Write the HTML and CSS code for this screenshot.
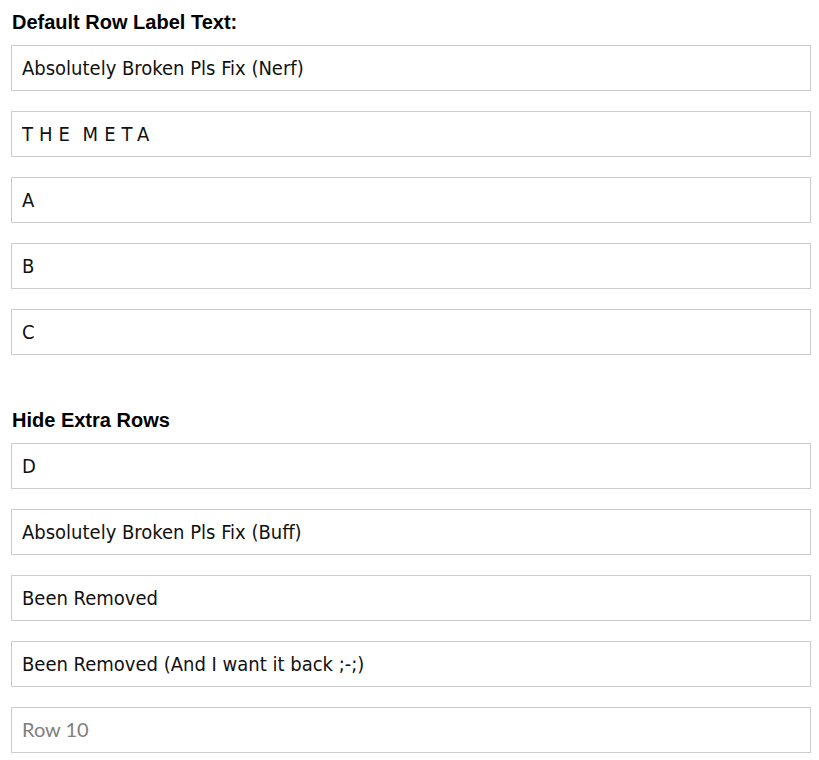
FILE: index.html
```html
<!DOCTYPE html>
<html>
<head>
<meta charset="utf-8">
<link rel="stylesheet" href="styles.css">
</head>
<body>
<div class="page">
  <section class="group">
    <h2 class="group-title">Default Row Label Text:</h2>
    <div class="fields">
      <input class="field" type="text" value="Absolutely Broken Pls Fix (Nerf)">
      <input class="field spaced" type="text" value="THE META">
      <input class="field" type="text" value="A">
      <input class="field" type="text" value="B">
      <input class="field" type="text" value="C">
    </div>
  </section>
  <section class="group">
    <h2 class="group-title">Hide Extra Rows</h2>
    <div class="fields">
      <input class="field" type="text" value="D">
      <input class="field" type="text" value="Absolutely Broken Pls Fix (Buff)">
      <input class="field" type="text" value="Been Removed">
      <input class="field" type="text" value="Been Removed (And I want it back ;-;)">
      <input class="field" type="text" placeholder="Row 10">
    </div>
  </section>
</div>
</body>
</html>
```
FILE: styles.css
```css
html, body {
  margin: 0;
  padding: 0;
  background: #ffffff;
}
.page {
  padding: 10px 8px 0 11px;
  display: flex;
  flex-direction: column;
  gap: 53px;
}
.group {
  display: flex;
  flex-direction: column;
}
.group-title {
  margin: 0 0 11px 1px;
  font-family: "Liberation Sans", Arial, sans-serif;
  font-weight: bold;
  font-size: 20px;
  line-height: 24px;
  color: #000;
}
.fields {
  display: flex;
  flex-direction: column;
  gap: 20px;
}
.field {
  box-sizing: border-box;
  width: 800px;
  height: 46px;
  margin: 0;
  padding: 0 10px;
  border: 1px solid #cccccc;
  border-radius: 0;
  background: #fff;
  font-family: "DejaVu Sans Condensed", "DejaVu Sans", sans-serif;
  font-size: 20px;
  color: #111;
  outline: none;
}
.field.spaced {
  letter-spacing: 6px;
  word-spacing: -5px;
}
.field::placeholder {
  font-family: Lato, sans-serif;
  color: #808080;
  opacity: 1;
}
```
